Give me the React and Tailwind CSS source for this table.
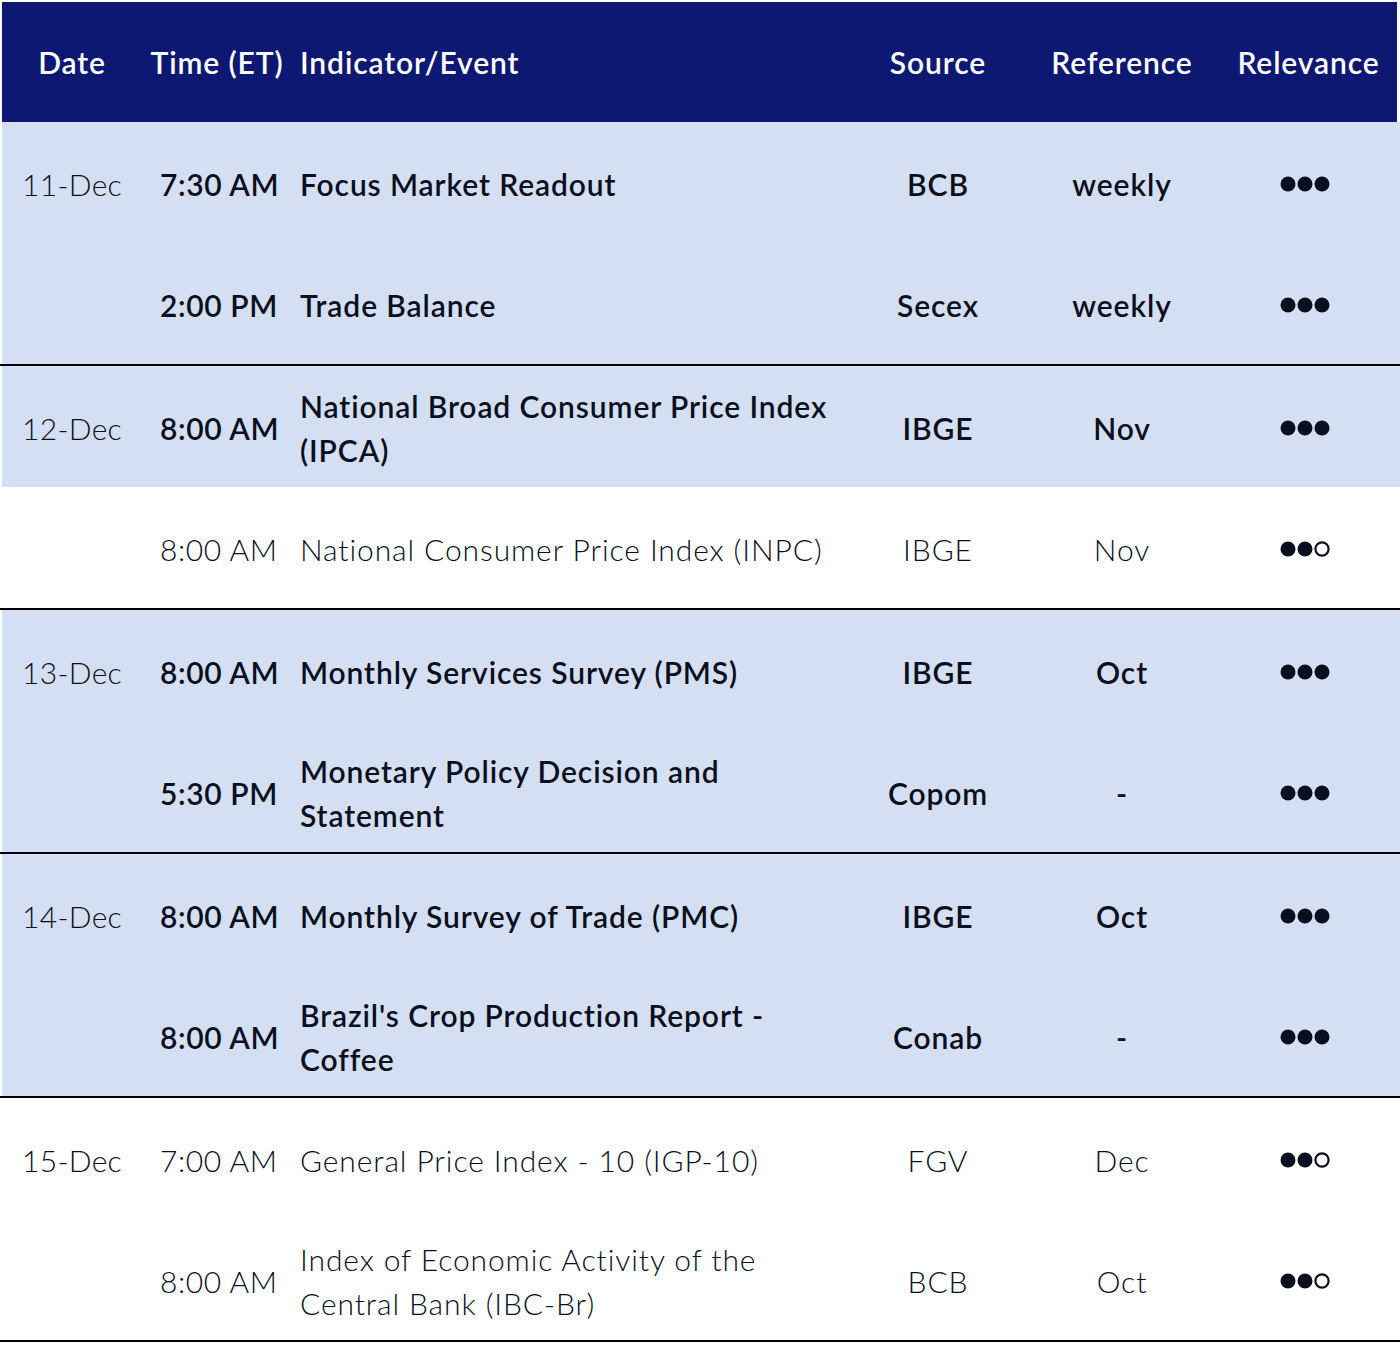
const groups = [
  {
    date: "11-Dec",
    tone: "blue",
    rows: [
      { time: "7:30 AM", event: ["Focus Market Readout"], source: "BCB", ref: "weekly", rel: 3 },
      { time: "2:00 PM", event: ["Trade Balance"], source: "Secex", ref: "weekly", rel: 3 }
    ]
  },
  {
    date: "12-Dec",
    rows: [
      { time: "8:00 AM", event: ["National Broad Consumer Price Index", "(IPCA)"], source: "IBGE", ref: "Nov", rel: 3, tone: "blue" },
      { time: "8:00 AM", event: ["National Consumer Price Index (INPC)"], source: "IBGE", ref: "Nov", rel: 2, tone: "white" }
    ]
  },
  {
    date: "13-Dec",
    tone: "blue",
    rows: [
      { time: "8:00 AM", event: ["Monthly Services Survey (PMS)"], source: "IBGE", ref: "Oct", rel: 3 },
      { time: "5:30 PM", event: ["Monetary Policy Decision and", "Statement"], source: "Copom", ref: "-", rel: 3 }
    ]
  },
  {
    date: "14-Dec",
    tone: "blue",
    rows: [
      { time: "8:00 AM", event: ["Monthly Survey of Trade (PMC)"], source: "IBGE", ref: "Oct", rel: 3 },
      { time: "8:00 AM", event: ["Brazil's Crop Production Report -", "Coffee"], source: "Conab", ref: "-", rel: 3 }
    ]
  },
  {
    date: "15-Dec",
    tone: "white",
    rows: [
      { time: "7:00 AM", event: ["General Price Index - 10 (IGP-10)"], source: "FGV", ref: "Dec", rel: 2 },
      { time: "8:00 AM", event: ["Index of Economic Activity of the", "Central Bank (IBC-Br)"], source: "BCB", ref: "Oct", rel: 2 }
    ]
  }
];

function Dots({ filled }) {
  return (
    <svg width="52" height="18" viewBox="0 0 52 18">
      {[0, 1, 2].map((i) =>
        i < filled ? (
          <circle key={i} cx={8 + i * 17} cy="9" r="7.5" fill="#0a0f1e" />
        ) : (
          <circle key={i} cx={8 + i * 17} cy="9" r="6.6" fill="none" stroke="#0a0f1e" strokeWidth="2.2" />
        )
      )}
    </svg>
  );
}

function Row({ date, row, tone }) {
  const bold = tone === "blue";
  const weight = bold ? "font-semibold" : "font-light";
  return (
    <div
      className={`ml-[2px] grid h-[121px] grid-cols-[140px_150px_568px_156px_212px_170px] items-center pt-[3px] text-[30px] leading-[44px] tracking-[0.03em] text-[#0a0f1e] ${
        bold ? "bg-[#d4dff3]" : "bg-white"
      }`}
    >
      <div className="pl-[20px] font-light tracking-[0.01em]">{date}</div>
      <div className={`pl-[18px] tracking-[0.02em] ${weight}`}>{row.time}</div>
      <div className={`pl-[8px] whitespace-nowrap ${weight}`}>
        {row.event.map((line) => (
          <div key={line}>{line}</div>
        ))}
      </div>
      <div className={`text-center ${weight}`}>{row.source}</div>
      <div className={`text-center ${weight}`}>{row.ref}</div>
      <div className="flex justify-center pr-[14px]">
        <Dots filled={row.rel} />
      </div>
    </div>
  );
}

export default function App() {
  return (
    <div className="w-[1400px] h-[1353px] bg-white pt-[2px]" style={{ fontFamily: "Lato, 'Open Sans', sans-serif" }}>
      <div className="ml-[2px] grid h-[120px] w-[1395px] grid-cols-[140px_150px_568px_156px_212px_169px] items-center bg-[#0d1873] text-[30px] font-semibold tracking-[0.03em] text-white">
        <div className="text-center">Date</div>
        <div className="text-center">Time (ET)</div>
        <div className="pl-[8px]">Indicator/Event</div>
        <div className="text-center">Source</div>
        <div className="text-center">Reference</div>
        <div className="text-center pr-[8px]">Relevance</div>
      </div>
      {groups.map((group) => (
        <div key={group.date}>
          {group.rows.map((row, i) => (
            <Row key={i} date={i === 0 ? group.date : ""} row={row} tone={row.tone || group.tone} />
          ))}
          <div className="h-[2px] bg-black" />
        </div>
      ))}
    </div>
  );
}
